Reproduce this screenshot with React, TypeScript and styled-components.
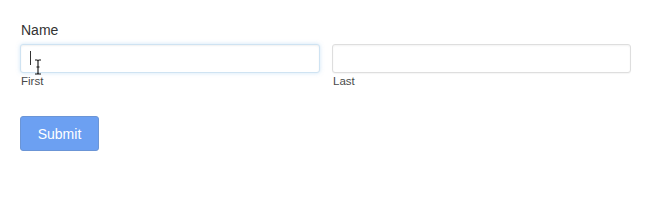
import React from "react";
import styled, { createGlobalStyle } from "styled-components";

const Global = createGlobalStyle`
  html, body { margin: 0; padding: 0; background: #fff; }
  body { font-family: "Liberation Sans", Arial, sans-serif; }
`;

const Page = styled.form`
  padding: 22px 19px 0 20px;
  width: 650px;
  box-sizing: border-box;
`;

const Legend = styled.div`
  font-size: 14px;
  color: #333;
  line-height: 16px;
  margin-bottom: 6px;
  padding-left: 1px;
`;

const Row = styled.div`
  display: grid;
  grid-template-columns: 300px 299px;
  column-gap: 12px;
`;

const Field = styled.div`
  display: flex;
  flex-direction: column;
`;

const InputWrap = styled.div`
  position: relative;
`;

const Input = styled.div<{ $focused?: boolean }>`
  height: 29px;
  box-sizing: border-box;
  border: 1px solid ${(p) => (p.$focused ? "#cfe3f2" : "#dedede")};
  border-radius: 3px;
  background: #fff;
  box-shadow: ${(p) =>
    p.$focused
      ? "0 0 4px rgba(120, 180, 230, 0.35), inset 0 1px 2px rgba(0,0,0,0.06)"
      : "inset 0 1px 2px rgba(0,0,0,0.05), 0 1px 1px rgba(0,0,0,0.04)"};
`;

const Caret = styled.span`
  position: absolute;
  left: 10px;
  top: 7px;
  width: 1px;
  height: 14px;
  background: #333;
`;

const Pointer = styled.svg`
  position: absolute;
  left: 14px;
  top: 15px;
`;

const SubLabel = styled.label`
  font-size: 11.5px;
  color: #4a4a4a;
  line-height: 13px;
  margin-top: 2px;
  padding-left: 1px;
`;

const Button = styled.button`
  margin-top: 28px;
  width: 79px;
  height: 35px;
  border: 1px solid #6b95d6;
  border-radius: 3px;
  background: #6ca0f2;
  color: #fff;
  font-family: "Liberation Sans", Arial, sans-serif;
  font-size: 14px;
  padding: 0;
  cursor: pointer;
`;

export default function App() {
  return (
    <>
      <Global />
      <Page onSubmit={(e) => e.preventDefault()}>
        <Legend>Name</Legend>
        <Row>
          <Field>
            <InputWrap>
              <Input $focused />
              <Caret />
              <Pointer width="8" height="16" viewBox="0 0 8 16">
                <path d="M1 1 H3 Q4 1 4 2.5 Q4 1 5 1 H7 M4 2.5 V13.5 M1 15 H3 Q4 15 4 13.5 Q4 15 5 15 H7 M2.5 8 H5.5" fill="none" stroke="#111" strokeWidth="1.1" />
              </Pointer>
            </InputWrap>
            <SubLabel>First</SubLabel>
          </Field>
          <Field>
            <InputWrap>
              <Input />
            </InputWrap>
            <SubLabel>Last</SubLabel>
          </Field>
        </Row>
        <Button type="submit">Submit</Button>
      </Page>
    </>
  );
}
